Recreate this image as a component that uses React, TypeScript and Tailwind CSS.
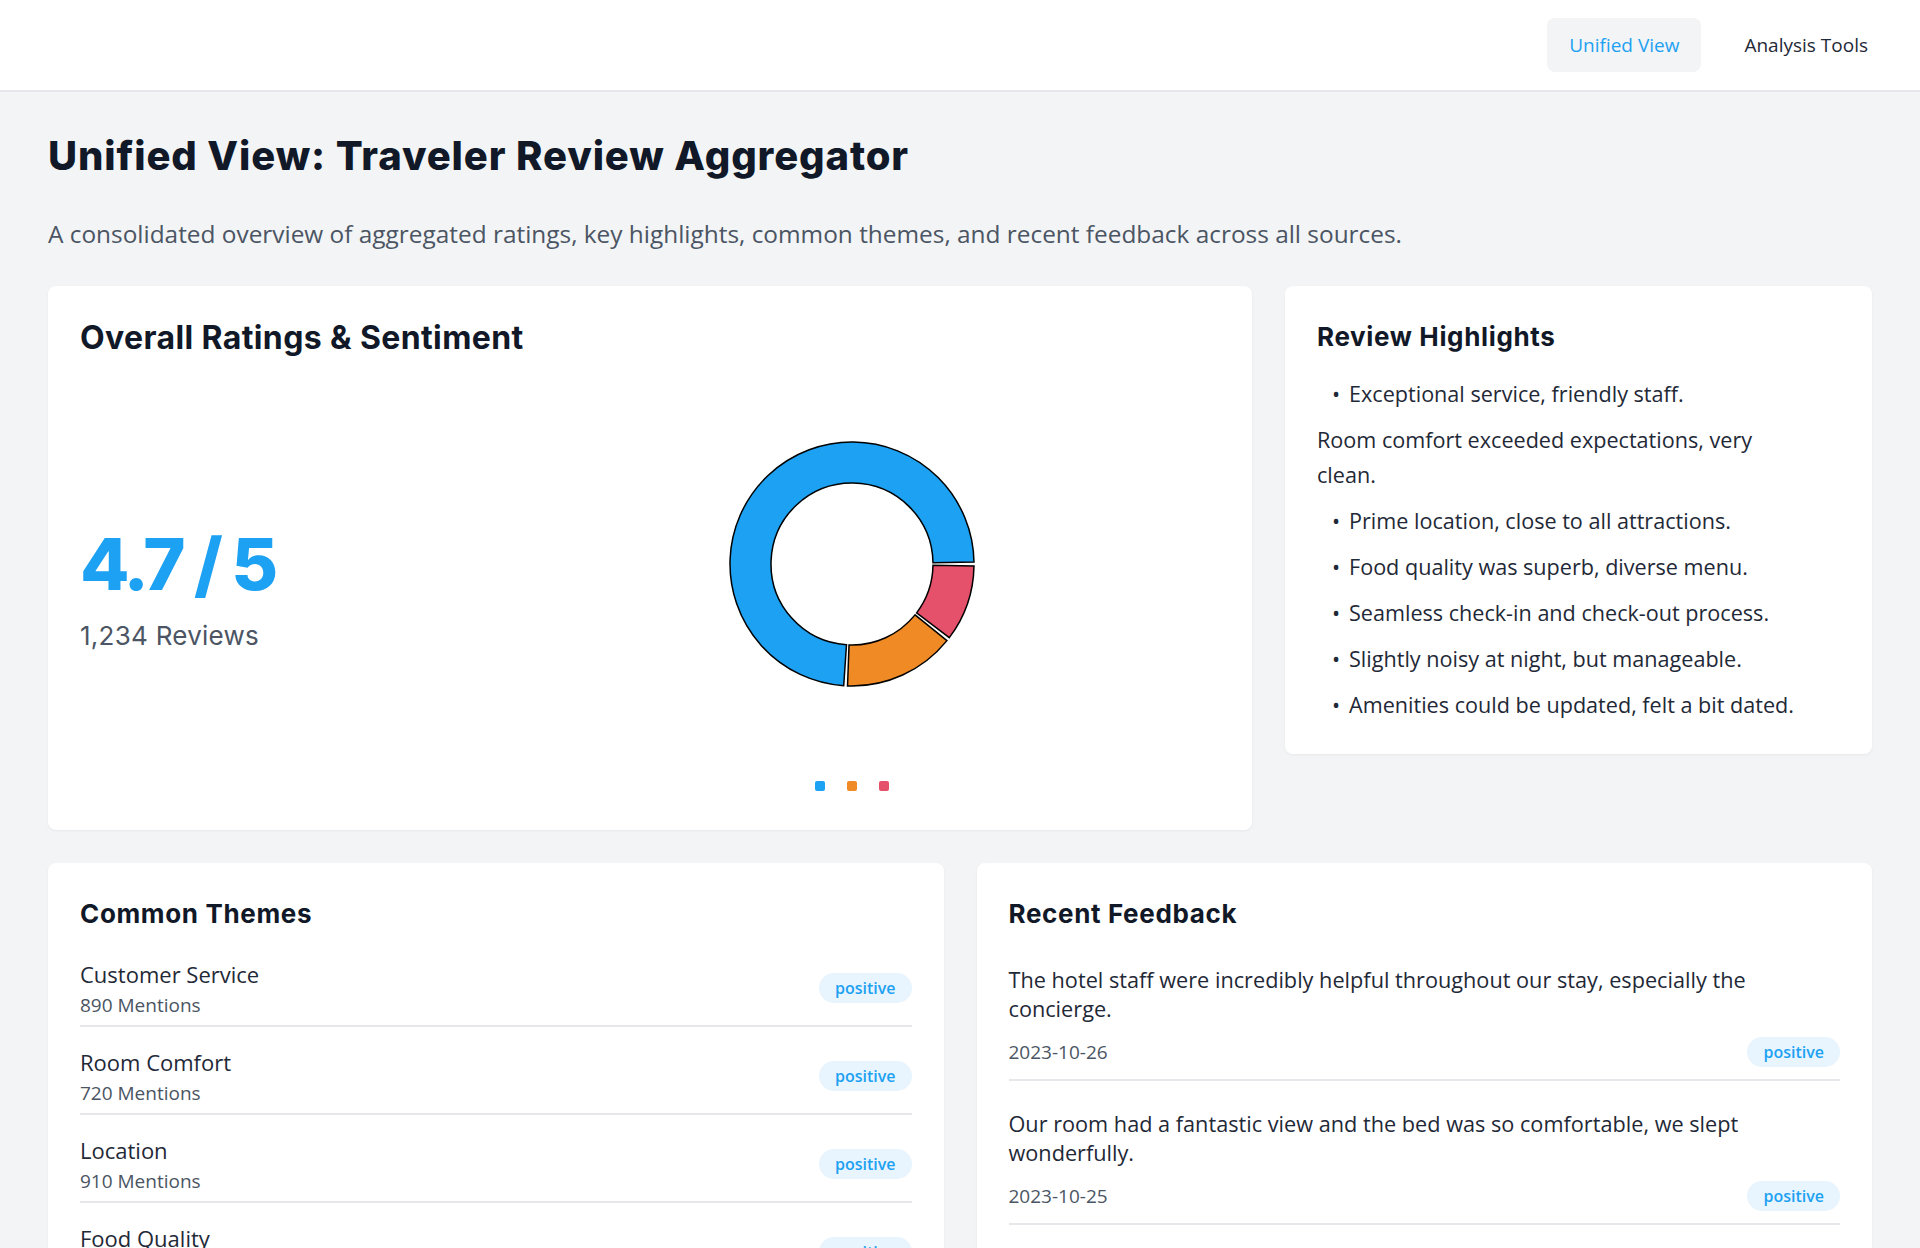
import React from "react";

type Segment = { label: string; color: string; from: number; to: number };

// angles in degrees, clockwise from 3 o'clock
const segments: Segment[] = [
  { label: "Positive", color: "#1DA1F2", from: 93, to: 360 },
  { label: "Neutral", color: "#F08A24", from: 38, to: 93 },
  { label: "Negative", color: "#E5506A", from: 0, to: 38 },
];

const highlights = [
  { text: "Exceptional service, friendly staff.", bullet: true },
  { text: "Room comfort exceeded expectations, very clean.", bullet: false },
  { text: "Prime location, close to all attractions.", bullet: true },
  { text: "Food quality was superb, diverse menu.", bullet: true },
  { text: "Seamless check-in and check-out process.", bullet: true },
  { text: "Slightly noisy at night, but manageable.", bullet: true },
  { text: "Amenities could be updated, felt a bit dated.", bullet: true },
];

const themes = [
  { name: "Customer Service", mentions: 890, sentiment: "positive" },
  { name: "Room Comfort", mentions: 720, sentiment: "positive" },
  { name: "Location", mentions: 910, sentiment: "positive" },
  { name: "Food Quality", mentions: 650, sentiment: "positive" },
  { name: "Noise Level", mentions: 210, sentiment: "neutral" },
];

const feedback = [
  {
    text: "The hotel staff were incredibly helpful throughout our stay, especially the concierge.",
    date: "2023-10-26",
    sentiment: "positive",
  },
  {
    text: "Our room had a fantastic view and the bed was so comfortable, we slept wonderfully.",
    date: "2023-10-25",
    sentiment: "positive",
  },
  {
    text: "Breakfast was good, but the selection could be a bit more varied.",
    date: "2023-10-24",
    sentiment: "neutral",
  },
];

function polar(radius: number, deg: number) {
  const a = (deg * Math.PI) / 180;
  return [130 + radius * Math.cos(a), 130 + radius * Math.sin(a)];
}

function arcPath(from: number, to: number) {
  const R = 122;
  const r = 81;
  const gap = 0.9;
  const a0 = from + gap;
  const a1 = to - gap;
  const large = a1 - a0 > 180 ? 1 : 0;
  const [x1, y1] = polar(R, a0);
  const [x2, y2] = polar(R, a1);
  const [x3, y3] = polar(r, a1);
  const [x4, y4] = polar(r, a0);
  return `M ${x1} ${y1} A ${R} ${R} 0 ${large} 1 ${x2} ${y2} L ${x3} ${y3} A ${r} ${r} 0 ${large} 0 ${x4} ${y4} Z`;
}

function Badge({ label }: { label: string }) {
  return (
    <span className="inline-flex h-[30px] items-center rounded-full bg-[#e8f5fe] px-4 text-[16px] font-semibold text-[#1DA1F2]">
      {label}
    </span>
  );
}

function CardTitle({ children }: { children: React.ReactNode }) {
  return (
    <h2 className="[font-family:Inter,sans-serif] text-[26px] leading-[38px] font-bold tracking-[0.025em] text-[#111827]">
      {children}
    </h2>
  );
}

export default function App() {
  return (
    <div className="min-h-screen bg-[#f3f4f6] [font-family:'Open_Sans',sans-serif]">
      {/* Top nav */}
      <nav className="flex h-[92px] items-center justify-end gap-[21px] border-b-2 border-[#e5e7eb] bg-white px-[30px]">
        <button className="h-[54px] rounded-lg bg-[#f3f4f6] px-[22px] text-[19px] font-medium text-[#1DA1F2]">
          Unified View
        </button>
        <button className="h-[54px] rounded-lg px-[22px] text-[19px] font-medium text-[#1f2937]">
          Analysis Tools
        </button>
      </nav>

      <main className="px-12 pt-10 pb-12">
        <h1 className="[font-family:Inter,sans-serif] text-[40px] leading-[48px] font-extrabold tracking-[0.022em] text-[#111827]">
          Unified View: Traveler Review Aggregator
        </h1>
        <p className="mt-[37px] text-[24.4px] leading-[33px] text-[#4b5563]">
          A consolidated overview of aggregated ratings, key highlights, common themes, and recent feedback across all
          sources.
        </p>

        {/* Top row */}
        <div className="mt-9 grid grid-cols-[1204px_1fr] items-start gap-[33px]">
          {/* Overall ratings */}
          <section className="rounded-lg bg-white p-8 shadow-[0_1px_3px_rgba(0,0,0,0.05)]">
            <h2 className="[font-family:Inter,sans-serif] text-[32px] leading-[40px] font-bold tracking-[0.012em] text-[#111827]">
              Overall Ratings &amp; Sentiment
            </h2>
            <div className="mt-6 flex h-[416px] items-center gap-6">
              <div className="w-[379px]">
                <div className="[font-family:Inter,sans-serif] text-[72px] leading-[72px] font-extrabold tracking-[-0.05em] text-[#1DA1F2]">
                  4.7 / 5
                </div>
                <div className="mt-5 [font-family:Inter,sans-serif] text-[26px] leading-[32px] tracking-[0.01em] text-[#4b5563]">
                  1,234 Reviews
                </div>
              </div>
              <div className="flex h-full flex-1 flex-col items-center pt-[52px]">
                <svg width="260" height="260" viewBox="0 0 260 260">
                  {segments.map((s) => (
                    <path key={s.label} d={arcPath(s.from, s.to)} fill={s.color} stroke="#000" strokeWidth="1.5" />
                  ))}
                </svg>
                <div className="mt-[87px] flex items-center gap-[22px]">
                  {segments.map((s) => (
                    <span key={s.label} className="h-[10px] w-[10px] rounded-[2px]" style={{ backgroundColor: s.color }} />
                  ))}
                </div>
              </div>
            </div>
          </section>

          {/* Highlights */}
          <section className="rounded-lg bg-white p-8 shadow-[0_1px_3px_rgba(0,0,0,0.05)]">
            <CardTitle>Review Highlights</CardTitle>
            <ul className="mt-[20px] space-y-[11px] text-[21.6px] leading-[35px] text-[#1f2937]">
              {highlights.map((h) =>
                h.bullet ? (
                  <li key={h.text} className="flex">
                    <span className="w-[32px] shrink-0 pl-[15px]">•</span>
                    <span>{h.text}</span>
                  </li>
                ) : (
                  <li key={h.text} className="max-w-[460px]">
                    {h.text}
                  </li>
                )
              )}
            </ul>
          </section>
        </div>

        {/* Bottom row */}
        <div className="mt-[33px] grid grid-cols-2 items-start gap-[33px]">
          <section className="rounded-lg bg-white p-8 shadow-[0_1px_3px_rgba(0,0,0,0.05)]">
            <CardTitle>Common Themes</CardTitle>
            <div className="mt-[18px]">
              {themes.map((t) => (
                <div key={t.name} className="mb-3 flex items-center justify-between border-b-2 border-[#e5e7eb] py-2">
                  <div>
                    <div className="text-[22px] leading-[30px] text-[#1f2937]">{t.name}</div>
                    <div className="mt-1 text-[19px] leading-[24px] text-[#4b5563]">{t.mentions} Mentions</div>
                  </div>
                  <Badge label={t.sentiment} />
                </div>
              ))}
            </div>
          </section>

          <section className="rounded-lg bg-white p-8 shadow-[0_1px_3px_rgba(0,0,0,0.05)]">
            <CardTitle>Recent Feedback</CardTitle>
            <div className="mt-[20px] space-y-4">
              {feedback.map((f) => (
                <div key={f.date} className="border-b-2 border-[#e5e7eb] py-3">
                  <p className="text-[21.7px] leading-[29px] text-[#1f2937]">{f.text}</p>
                  <div className="mt-[14px] flex items-center justify-between">
                    <span className="text-[19px] leading-[24px] text-[#4b5563]">{f.date}</span>
                    <Badge label={f.sentiment} />
                  </div>
                </div>
              ))}
            </div>
          </section>
        </div>
      </main>
    </div>
  );
}
